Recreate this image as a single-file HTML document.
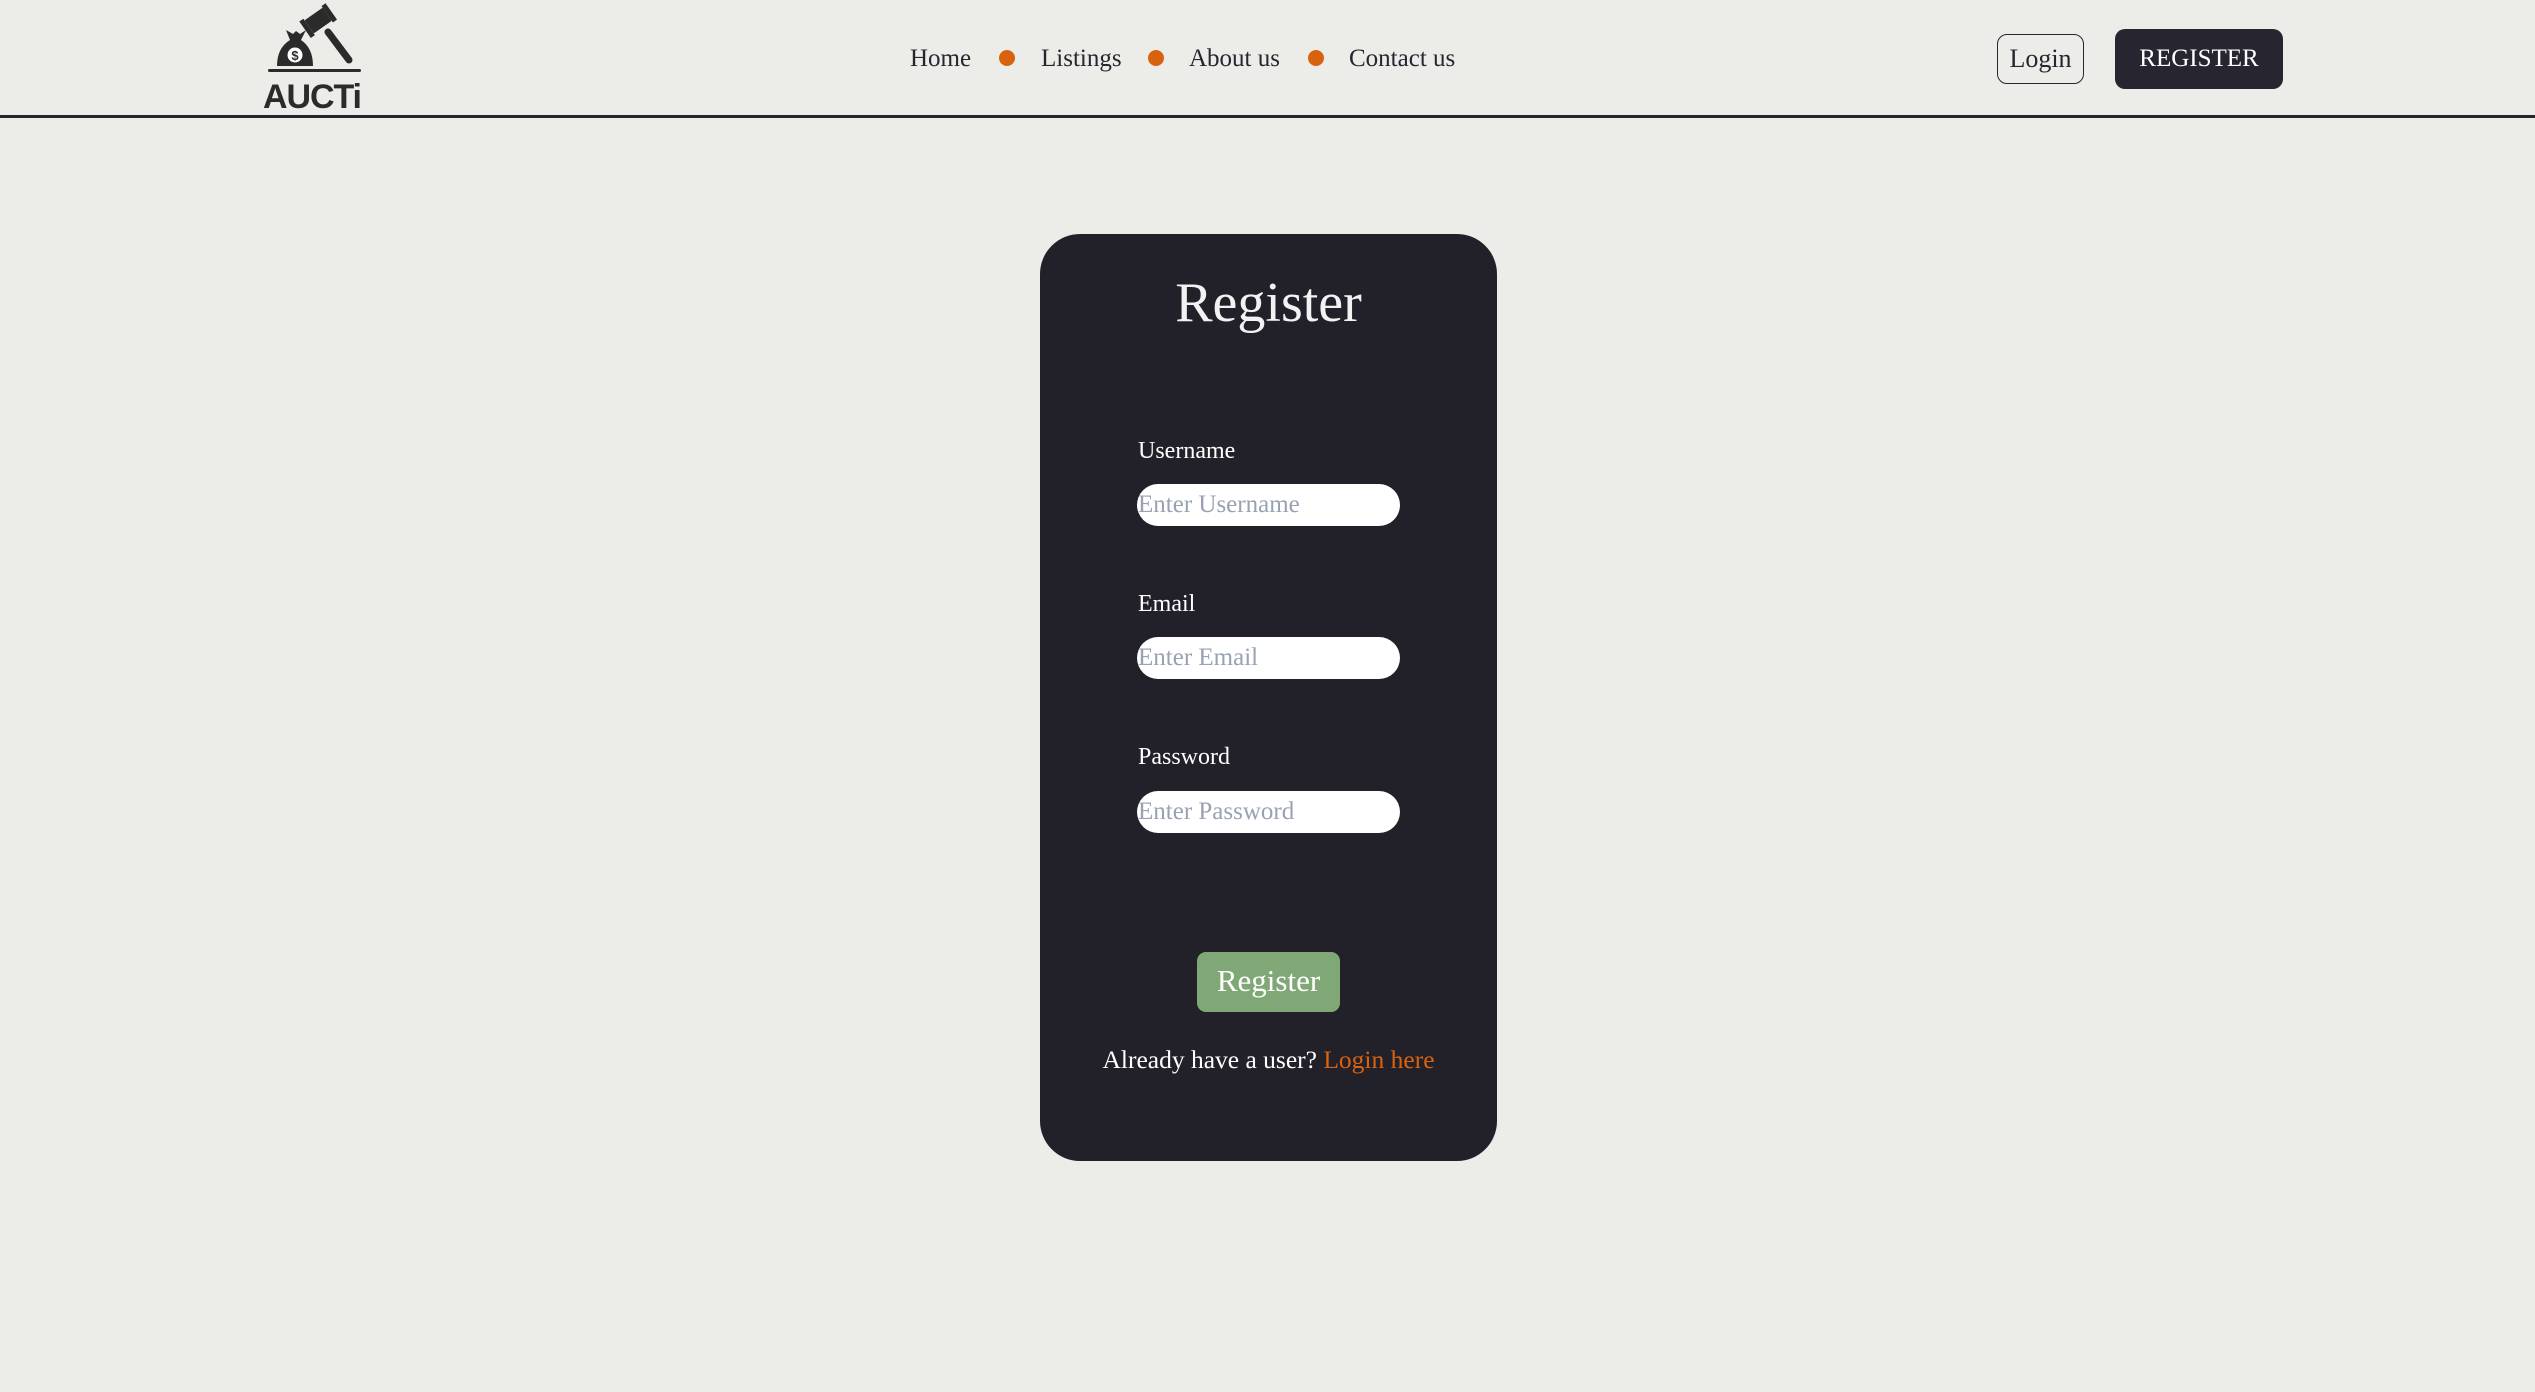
<!DOCTYPE html>
<html><head><meta charset="utf-8"><style>
*{margin:0;padding:0;box-sizing:border-box}
body{width:2535px;height:1392px;background:#ecede8;font-family:"Liberation Serif",serif;position:relative;overflow:hidden;color:#27252f}
.abs{position:absolute}
.hdr{left:0;top:115px;width:2535px;height:3px;background:#27252f}
.nav{top:41px;font-size:25px;line-height:36px;white-space:nowrap}
.dot{width:16px;height:16px;border-radius:50%;background:#d9620f;top:50px}
.login{left:1997px;top:34px;width:87px;height:50px;border:1.5px solid #27252f;border-radius:10px;font-size:26px;text-align:center;line-height:48px}
.reg{left:2115px;top:29px;width:168px;height:60px;background:#27252f;border-radius:10px;color:#fff;font-size:25px;text-align:center;line-height:60px}
.card{left:1040px;top:234px;width:457px;height:927px;background:#222028;border-radius:40px}
.title{left:1040px;width:457px;top:268px;text-align:center;color:#f2f2f2;font-size:56px;line-height:70px}
.lbl{left:1138px;color:#fff;font-size:24px;line-height:30px}
.inp{left:1137px;width:263px;height:42px;background:#fff;border-radius:21px;color:#98a2b3;font-size:25px;line-height:42px;padding-left:1px;white-space:nowrap;overflow:hidden}
.btn{left:1197px;top:952px;width:143px;height:60px;background:#80a877;border-radius:9px;color:#fff;font-size:31px;text-align:center;line-height:58px}
.foot{left:1040px;width:457px;top:1044px;text-align:center;color:#fff;font-size:25.5px;line-height:32px}
.foot span{color:#d9620f}
</style></head><body>
<svg class="abs" style="left:262px;top:0px" width="104" height="112" viewBox="0 0 104 112">
 <g fill="#2b2b2b">
  <path d="M24 30 L31 34 L34 31 L38 34 L44 30 L39 40 Q51 48 51 66 L15 66 Q15 48 28 40 Z"/>
  <g transform="rotate(-35 57 20)"><rect x="45" y="12" width="22" height="16" rx="1"/><rect x="67" y="10" width="5" height="20"/><rect x="40" y="10" width="5" height="20"/></g>
  <rect x="6" y="69" width="93" height="3" rx="1.5"/>
 </g>
 <line x1="66" y1="32" x2="87" y2="60" stroke="#2b2b2b" stroke-width="7" stroke-linecap="round"/>
 <circle cx="33" cy="55" r="7.5" fill="#fff"/>
 <text x="33" y="60" fill="#2b2b2b" font-family="Liberation Sans,sans-serif" font-weight="bold" font-size="13" text-anchor="middle">$</text>
 <text x="1" y="108" fill="#2b2b2b" font-family="Liberation Sans,sans-serif" font-weight="bold" font-size="34" textLength="99">AUCTi</text>
</svg>
<div class="abs hdr"></div>
<div class="abs nav" style="left:910px">Home</div>
<div class="abs dot" style="left:999px"></div>
<div class="abs nav" style="left:1041px">Listings</div>
<div class="abs dot" style="left:1148px"></div>
<div class="abs nav" style="left:1189px">About us</div>
<div class="abs dot" style="left:1308px"></div>
<div class="abs nav" style="left:1349px">Contact us</div>
<div class="abs login">Login</div>
<div class="abs reg">REGISTER</div>

<div class="abs card"></div>
<div class="abs title">Register</div>
<div class="abs lbl" style="top:436px">Username</div>
<div class="abs inp" style="top:484px">Enter Username</div>
<div class="abs lbl" style="top:589px">Email</div>
<div class="abs inp" style="top:637px">Enter Email</div>
<div class="abs lbl" style="top:742px">Password</div>
<div class="abs inp" style="top:791px">Enter Password</div>
<div class="abs btn">Register</div>
<div class="abs foot">Already have a user? <span>Login here</span></div>
</body></html>
